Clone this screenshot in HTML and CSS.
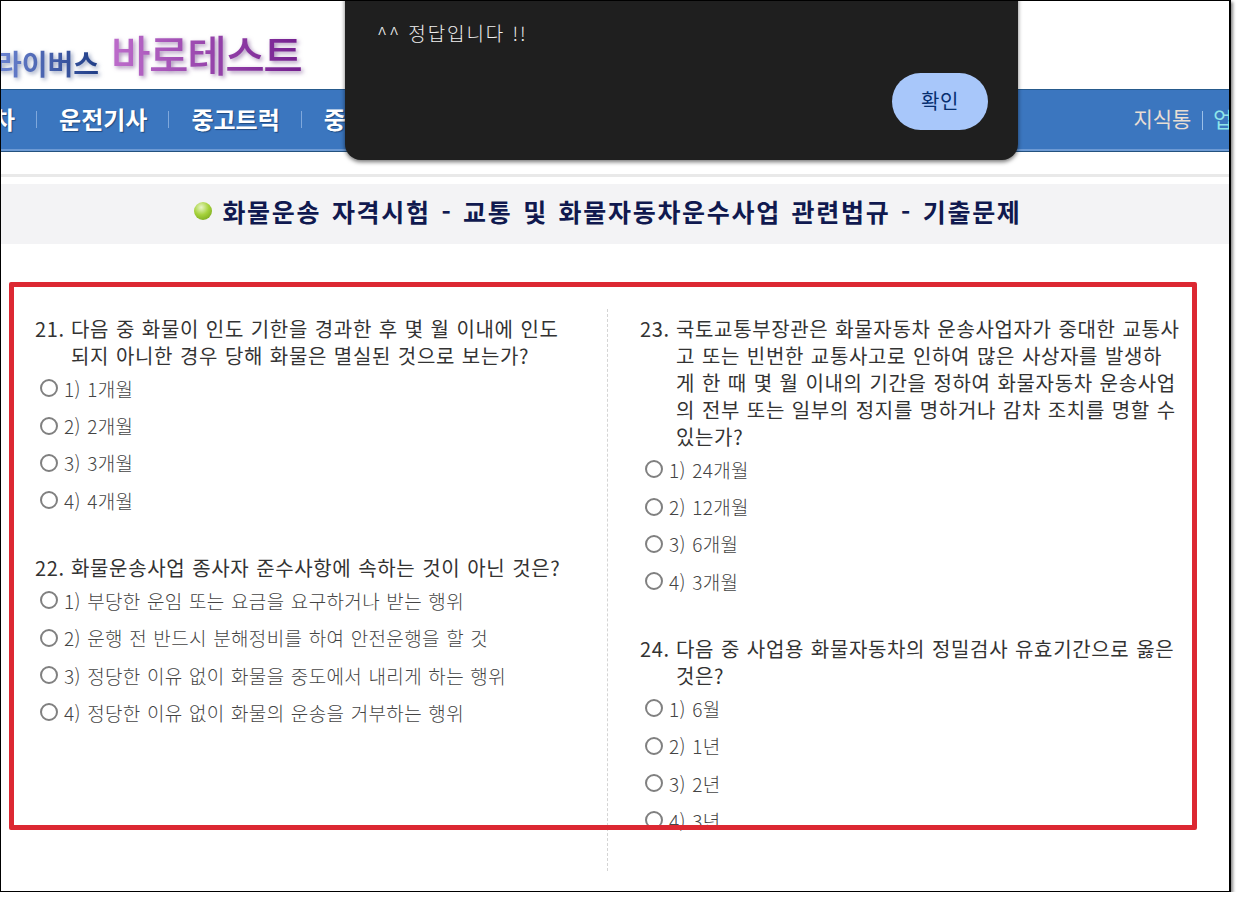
FILE: index.html
```html
<!DOCTYPE html>
<html lang="ko">
<head>
<meta charset="utf-8">
<title>화물운송 자격시험 기출문제</title>
<link rel="stylesheet" href="styles.css">
</head>
<body>
<div class="frame">
  <header class="brand">
    <span class="brand-sub">라이버스</span>
    <span class="brand-main">바로테스트</span>
  </header>
  <nav class="nav">
    <ul class="nav-main">
      <li class="clip-first">차</li>
      <li>운전기사</li>
      <li>중고트럭</li>
      <li>중고차</li>
    </ul>
    <ul class="nav-side">
      <li>지식통</li>
      <li class="accent">업계</li>
    </ul>
  </nav>
  <div class="rule"></div>
  <h1 class="title"><span class="ball"></span>화물운송 자격시험 - 교통 및 화물자동차운수사업 관련법규 - 기출문제</h1>
  <main class="sheet">
    <section class="col col-left">
      <div class="q">
        <p class="stem"><span class="num">21.</span><span class="txt">다음 중 화물이 인도 기한을 경과한 후 몇 월 이내에 인도<br>되지 아니한 경우 당해 화물은 멸실된 것으로 보는가?</span></p>
        <label class="opt"><input type="radio" name="q21"><span>1) 1개월</span></label>
        <label class="opt"><input type="radio" name="q21"><span>2) 2개월</span></label>
        <label class="opt"><input type="radio" name="q21"><span>3) 3개월</span></label>
        <label class="opt"><input type="radio" name="q21"><span>4) 4개월</span></label>
      </div>
      <div class="q">
        <p class="stem"><span class="num">22.</span><span class="txt">화물운송사업 종사자 준수사항에 속하는 것이 아닌 것은?</span></p>
        <label class="opt"><input type="radio" name="q22"><span>1) 부당한 운임 또는 요금을 요구하거나 받는 행위</span></label>
        <label class="opt"><input type="radio" name="q22"><span>2) 운행 전 반드시 분해정비를 하여 안전운행을 할 것</span></label>
        <label class="opt"><input type="radio" name="q22"><span>3) 정당한 이유 없이 화물을 중도에서 내리게 하는 행위</span></label>
        <label class="opt"><input type="radio" name="q22"><span>4) 정당한 이유 없이 화물의 운송을 거부하는 행위</span></label>
      </div>
    </section>
    <section class="col col-right">
      <div class="q">
        <p class="stem"><span class="num">23.</span><span class="txt">국토교통부장관은 화물자동차 운송사업자가 중대한 교통사<br>고 또는 빈번한 교통사고로 인하여 많은 사상자를 발생하<br>게 한 때 몇 월 이내의 기간을 정하여 화물자동차 운송사업<br>의 전부 또는 일부의 정지를 명하거나 감차 조치를 명할 수<br>있는가?</span></p>
        <label class="opt"><input type="radio" name="q23"><span>1) 24개월</span></label>
        <label class="opt"><input type="radio" name="q23"><span>2) 12개월</span></label>
        <label class="opt"><input type="radio" name="q23"><span>3) 6개월</span></label>
        <label class="opt"><input type="radio" name="q23"><span>4) 3개월</span></label>
      </div>
      <div class="q">
        <p class="stem"><span class="num">24.</span><span class="txt">다음 중 사업용 화물자동차의 정밀검사 유효기간으로 옳은<br>것은?</span></p>
        <label class="opt"><input type="radio" name="q24"><span>1) 6월</span></label>
        <label class="opt"><input type="radio" name="q24"><span>2) 1년</span></label>
        <label class="opt"><input type="radio" name="q24"><span>3) 2년</span></label>
        <label class="opt"><input type="radio" name="q24"><span>4) 3년</span></label>
      </div>
    </section>
  </main>
  <div class="redbox"></div>
  <div class="dialog" role="alertdialog">
    <p class="dialog-msg">^^ 정답입니다 !!</p>
    <button class="dialog-btn" type="button">확인</button>
  </div>
</div>
</body>
</html>
```
FILE: styles.css
```css
* { box-sizing: border-box; }
html, body { margin: 0; padding: 0; background: #fff; }
body { font-family: "Noto Sans CJK KR", "Noto Sans", sans-serif; color: #333; }

.frame {
  position: relative;
  width: 1231px;
  height: 892px;
  border: 1px solid #000;
  border-right-width: 2px;
  background: #fff;
  overflow: hidden;
  box-shadow: 2px 2px 3px #888;
}
.brand {
  height: 88px;
  display: flex;
  align-items: flex-end;
  gap: 12px;
  padding-bottom: 11px;
  margin-left: -5px;
  white-space: nowrap;
}
.brand-sub {
  font-size: 28px;
  font-weight: 700;
  line-height: 30px;
  background: linear-gradient(90deg, #6f86d4, #1f3d86);
  -webkit-background-clip: text;
  background-clip: text;
  color: transparent;
  filter: drop-shadow(2px 2px 2px rgba(70, 90, 140, .55));
}
.brand-main {
  font-size: 43px;
  font-weight: 500;
  letter-spacing: -1.5px;
  line-height: 50px;
  background: linear-gradient(90deg, #bd6ccb, #74208f);
  -webkit-background-clip: text;
  background-clip: text;
  color: transparent;
  filter: drop-shadow(2px 2px 2px rgba(90, 40, 120, .5));
}

.nav {
  height: 63px;
  display: flex;
  justify-content: space-between;
  align-items: center;
  padding-bottom: 5px;
  background: #3b76bf;
  border-top: 1px solid #265a8c;
  border-bottom: 1px solid #24527f;
  box-shadow: inset 0 -2px 0 #6d9ad4;
  white-space: nowrap;
}
.nav ul { list-style: none; margin: 0; padding: 0; display: flex; }
.nav .nav-main { margin-left: -8px; font-size: 24px; font-weight: 700; color: #fff; }
.nav-main li { padding: 0 22px; position: relative; text-shadow: 1px 1px 1px #1f4a80; }
.nav-main li + li::before {
  content: "";
  position: absolute;
  left: -1px;
  top: 10px;
  height: 17px;
  width: 1px;
  background: #7fa8dc;
}
.nav-main .clip-first { padding-left: 0; padding-right: 22px; }
.nav .nav-side { font-size: 21px; color: #e8ded4; margin-right: -34px; }
.nav-side li { padding: 0 11px; position: relative; }
.nav-side li + li::before {
  content: "";
  position: absolute;
  left: 0;
  top: 8px;
  height: 19px;
  width: 1px;
  background: #9cc0e8;
}
.nav-side .accent { color: #8fe6ea; }

.rule { height: 3px; margin-top: 22px; background: #e9e9e9; }
.title {
  margin: 7px 0 0;
  height: 60px;
  background: #f3f3f5;
  display: flex;
  justify-content: center;
  align-items: center;
  gap: 10px;
  padding: 0 14px 6px 0;
  font-size: 25px;
  font-weight: 700;
  letter-spacing: 1.7px;
  word-spacing: 2px;
  color: #10194f;
  white-space: nowrap;
}
.ball {
  width: 18px;
  height: 18px;
  border-radius: 50%;
  background: radial-gradient(circle at 40% 30%, #e8f5c8 0, #a6d23c 45%, #6a9a12 100%);
}

.sheet {
  display: grid;
  grid-template-columns: 607px 1fr;
  padding-top: 65px;
}
.col { height: 562px; }
.col-left { padding: 6px 20px 0 34px; border-right: 1px dashed #d4d4d4; }
.col-right { padding: 6px 20px 0 32px; }
.q + .q { margin-top: 35px; }
.stem {
  display: flex;
  margin: 0 0 .5px;
  font-size: 20px;
  line-height: 27px;
  letter-spacing: .65px;
  word-spacing: .6px;
  color: #333;
  white-space: nowrap;
}
.num { flex: 0 0 36px; }
.opt {
  display: flex;
  align-items: center;
  height: 37.4px;
  font-size: 19px;
  font-weight: 300;
  letter-spacing: .37px;
  word-spacing: .6px;
  color: #444;
  white-space: nowrap;
}
.opt input {
  appearance: none;
  width: 18px;
  height: 18px;
  margin: 0 6px 0 5px;
  flex: none;
  border: 2px solid #808080;
  border-radius: 50%;
  background: #fff;
}

.redbox {
  position: absolute;
  left: 8px;
  top: 281px;
  width: 1188px;
  height: 548px;
  border: 5px solid #dc2832;
  border-radius: 2px;
  pointer-events: none;
}
.dialog {
  position: absolute;
  left: 344px;
  top: -20px;
  width: 673px;
  height: 179px;
  background: #1f1f1f;
  border-radius: 16px;
  box-shadow: 0 2px 4px rgba(0, 0, 0, .55);
}
.dialog-msg {
  position: absolute;
  left: 32px;
  top: 39px;
  margin: 0;
  font-size: 19px;
  font-weight: 300;
  letter-spacing: 1.9px;
  line-height: 26px;
  color: #f0f0f0;
}
.dialog-btn {
  position: absolute;
  right: 30px;
  bottom: 30px;
  width: 96px;
  height: 57px;
  padding: 0 0 3px;
  border: 0;
  border-radius: 28.5px;
  background: #a8c7fa;
  color: #062e6f;
  font: 400 20px "Noto Sans CJK KR", sans-serif;
  letter-spacing: .5px;
}
```
